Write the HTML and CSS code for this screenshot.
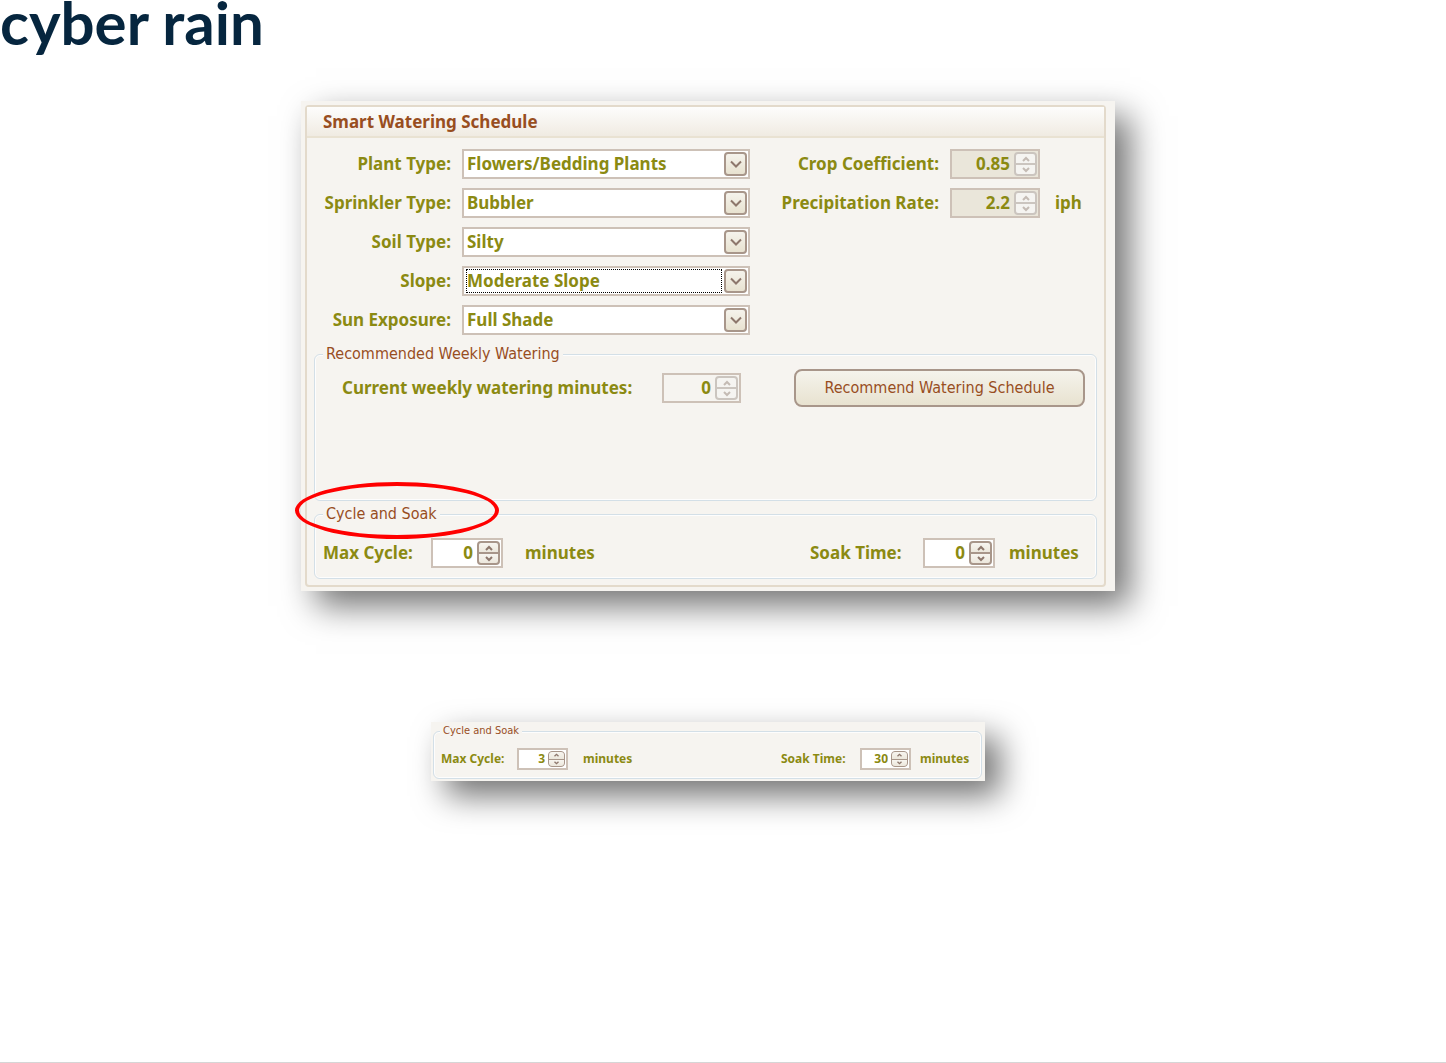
FILE: index.html
```html
<!DOCTYPE html>
<html lang="en">
<head>
  <meta charset="UTF-8">
  <meta name="viewport" content="width=device-width, initial-scale=1.0">
  <title>Cyber Rain - Smart Watering Schedule</title>
  <link rel="stylesheet" href="styles.css">
</head>
<body>

  <!-- Shared icons -->
  <svg class="sprite" aria-hidden="true">
    <symbol id="drop" viewBox="0 0 12 8"><path d="M1 1.5 L6 6.5 L11 1.5" /></symbol>
    <symbol id="up" viewBox="0 0 10 6"><path d="M2 5 L5 2 L8 5" /></symbol>
    <symbol id="down" viewBox="0 0 10 6"><path d="M2 1 L5 4 L8 1" /></symbol>
  </svg>

  <header class="logo">cyber rain</header>

  <main class="content">
    <!-- Schedule panel -->
    <section class="panel">
      <div class="frame">
        <h1 class="frame-title">Smart Watering Schedule</h1>

        <form class="settings">
          <label class="name" for="plant">Plant Type:</label>
          <span class="select">
            <select id="plant"><option>Flowers/Bedding Plants</option></select>
            <span class="arrow"><svg><use href="#drop" /></svg></span>
          </span>
          <label class="name" for="crop">Crop Coefficient:</label>
          <span class="spinner disabled filled">
            <input id="crop" type="number" step="0.01" value="0.85" disabled>
            <span class="steps">
              <button type="button" aria-label="Increase" disabled><svg><use href="#up" /></svg></button>
              <button type="button" aria-label="Decrease" disabled><svg><use href="#down" /></svg></button>
            </span>
          </span>
          <span></span>

          <label class="name" for="sprinkler">Sprinkler Type:</label>
          <span class="select">
            <select id="sprinkler"><option>Bubbler</option></select>
            <span class="arrow"><svg><use href="#drop" /></svg></span>
          </span>
          <label class="name" for="rate">Precipitation Rate:</label>
          <span class="spinner disabled filled">
            <input id="rate" type="number" step="0.1" value="2.2" disabled>
            <span class="steps">
              <button type="button" aria-label="Increase" disabled><svg><use href="#up" /></svg></button>
              <button type="button" aria-label="Decrease" disabled><svg><use href="#down" /></svg></button>
            </span>
          </span>
          <span class="unit">iph</span>

          <label class="name first" for="soil">Soil Type:</label>
          <span class="select">
            <select id="soil"><option>Silty</option></select>
            <span class="arrow"><svg><use href="#drop" /></svg></span>
          </span>

          <label class="name first" for="slope">Slope:</label>
          <span class="select focused">
            <select id="slope"><option>Moderate Slope</option></select>
            <span class="arrow"><svg><use href="#drop" /></svg></span>
          </span>

          <label class="name first" for="sun">Sun Exposure:</label>
          <span class="select">
            <select id="sun"><option>Full Shade</option></select>
            <span class="arrow"><svg><use href="#drop" /></svg></span>
          </span>
        </form>

        <fieldset class="group weekly">
          <legend>Recommended Weekly Watering</legend>
          <div class="weekly-row">
            <label for="current">Current weekly watering minutes:</label>
            <span class="spinner disabled">
              <input id="current" type="number" value="0" disabled>
              <span class="steps">
                <button type="button" aria-label="Increase" disabled><svg><use href="#up" /></svg></button>
                <button type="button" aria-label="Decrease" disabled><svg><use href="#down" /></svg></button>
              </span>
            </span>
            <button class="recommend" type="button">Recommend Watering Schedule</button>
          </div>
        </fieldset>

        <fieldset class="group cycle">
          <legend>Cycle and Soak</legend>
          <div class="cycle-row">
            <div class="max">
              <label for="max1">Max Cycle:</label>
              <span class="spinner">
                <input id="max1" type="number" value="0">
                <span class="steps">
                  <button type="button" aria-label="Increase"><svg><use href="#up" /></svg></button>
                  <button type="button" aria-label="Decrease"><svg><use href="#down" /></svg></button>
                </span>
              </span>
              <span>minutes</span>
            </div>
            <div class="soak">
              <label for="soak1">Soak Time:</label>
              <span class="spinner">
                <input id="soak1" type="number" value="0">
                <span class="steps">
                  <button type="button" aria-label="Increase"><svg><use href="#up" /></svg></button>
                  <button type="button" aria-label="Decrease"><svg><use href="#down" /></svg></button>
                </span>
              </span>
              <span>minutes</span>
            </div>
          </div>
          <span class="callout"></span>
        </fieldset>
      </div>
    </section>

    <!-- Cycle and Soak example -->
    <section class="panel mini">
      <fieldset class="group cycle">
        <legend>Cycle and Soak</legend>
        <div class="cycle-row">
          <div class="max">
            <label for="max2">Max Cycle:</label>
            <span class="spinner">
              <input id="max2" type="number" value="3">
              <span class="steps">
                <button type="button" aria-label="Increase"><svg><use href="#up" /></svg></button>
                <button type="button" aria-label="Decrease"><svg><use href="#down" /></svg></button>
              </span>
            </span>
            <span>minutes</span>
          </div>
          <div class="soak">
            <label for="soak2">Soak Time:</label>
            <span class="spinner">
              <input id="soak2" type="number" value="30">
              <span class="steps">
                <button type="button" aria-label="Increase"><svg><use href="#up" /></svg></button>
                <button type="button" aria-label="Decrease"><svg><use href="#down" /></svg></button>
              </span>
            </span>
            <span>minutes</span>
          </div>
        </div>
      </fieldset>
    </section>
  </main>

</body>
</html>
```
FILE: styles.css
```css
* {
  margin: 0;
  padding: 0;
  box-sizing: border-box;
}

body {
  display: flex;
  flex-direction: column;
  min-height: 100vh;
  background: #fff;
  color: #8b8a12;
  font: bold 17px/20px "Noto Sans", sans-serif;
  border-bottom: 1px solid #d6d6d6;
}

input, select, button {
  font: inherit;
  color: inherit;
}

.sprite {
  position: absolute;
  width: 0;
  height: 0;
}

.logo {
  height: 101px;
  color: #06263f;
  font: bold 60px/44px Lato, sans-serif;
}

.content {
  display: flex;
  flex-direction: column;
  align-items: center;
  padding-right: 30px;
}

/* Panels */
.panel {
  width: 100%;
  max-width: 814px;
  padding: 4px 9px 4px 4px;
  background: #f6f4f0;
  box-shadow: 15px 15px 32px rgba(0, 0, 0, 0.55);
}

.frame {
  padding-bottom: 6px;
  border: 2px solid #e3dacb;
  border-radius: 4px;
}

.frame-title {
  padding: 5px 16px 4px;
  border-bottom: 2px solid #e9e2d2;
  background: linear-gradient(#fdfdfc, #f0ebe2);
  color: #984e1f;
  font-size: 17px;
  line-height: 20px;
}

/* Settings grid */
.settings {
  display: grid;
  grid-template-columns: 144px 288px 1fr 90px 53px;
  gap: 9px 11px;
  align-items: center;
  padding: 11px 0 9px;
}

.name {
  text-align: right;
}

.first {
  grid-column: 1;
}

.unit {
  padding-left: 4px;
}

.select {
  position: relative;
  height: 30px;
  padding: 2px 3px;
  border: 2px solid #cdc1b7;
  background: #fff;
}

.select select {
  display: block;
  width: 100%;
  height: 22px;
  border: 0;
  background: none;
  appearance: none;
}

.focused {
  padding-right: 27px;
}

.focused select {
  outline: 1px dotted #000;
}

.arrow {
  position: absolute;
  top: 1px;
  right: 1px;
  display: flex;
  align-items: center;
  justify-content: center;
  width: 23px;
  height: 24px;
  border: 2px solid #a8968a;
  border-radius: 4px;
  background: linear-gradient(#f5f3ec, #e8e2d0);
  pointer-events: none;
}

.arrow svg {
  width: 12px;
  height: 8px;
}

svg {
  fill: none;
  stroke: #8d776c;
  stroke-width: 2;
}

/* Number boxes */
.spinner {
  display: flex;
  height: 30px;
  padding: 1px;
  border: 2px solid #cdc1b7;
  background: #fff;
}

.spinner input {
  flex: 1;
  width: 0;
  padding-right: 4px;
  border: 0;
  background: none;
  text-align: right;
  appearance: textfield;
}

.spinner input::-webkit-inner-spin-button {
  appearance: none;
}

.steps {
  display: flex;
  flex-direction: column;
  width: 23px;
  border: 2px solid #a8968a;
  border-radius: 4px;
  background: #a8968a;
  gap: 2px;
  overflow: hidden;
}

.steps button {
  display: flex;
  flex: 1;
  align-items: center;
  justify-content: center;
  min-height: 0;
  border: 0;
  background: linear-gradient(#f7f5f0, #ece7dc);
}

.steps svg {
  width: 10px;
  height: 6px;
}

.disabled {
  background: #f6f4f0;
}

.filled {
  background: #eae6da;
}

.disabled .steps {
  border-color: #cbc5bf;
  background: #cbc5bf;
}

.disabled .steps button {
  background: #f5f4f1;
}

.disabled svg {
  stroke: #c4bbb4;
}

/* Groups */
.group {
  position: relative;
  min-width: 0;
  margin: 0 7px;
  padding: 1px;
  border: 1px solid #d3dfe7;
  border-radius: 6px;
  box-shadow: inset 0 0 0 1px #fdfdfd;
}

.group legend {
  margin-left: 7px;
  padding: 0 3px;
  background: #f6f4f0;
  color: #984e1f;
  font: 16px/20px "DejaVu Sans Condensed", sans-serif;
}

.weekly {
  height: 157px;
  margin-bottom: 3px;
}

.weekly-row {
  display: flex;
  align-items: center;
  padding: 4px 10px 0 26px;
}

.weekly-row label {
  width: 320px;
}

.weekly-row .spinner {
  width: 79px;
}

.recommend {
  width: 291px;
  height: 38px;
  margin-left: auto;
  border: 2px solid #a8968a;
  border-radius: 8px;
  background: linear-gradient(#f5f3ec, #e8e2d0);
  color: #984e1f;
  font: 16px/20px "DejaVu Sans Condensed", sans-serif;
}

.cycle-row {
  display: flex;
  justify-content: space-between;
  padding: 13px 17px 9px 7px;
}

.max, .soak {
  display: grid;
  align-items: center;
}

.max {
  grid-template-columns: 108px 94px auto;
}

.soak {
  grid-template-columns: 113px 86px 69px;
}

.cycle-row .spinner {
  width: 72px;
}

.callout {
  position: absolute;
  top: -42px;
  left: -20px;
  width: 204px;
  height: 57px;
  border: 4px solid #f00;
  border-radius: 50%;
}

/* Small panel */
.mini {
  max-width: 554px;
  margin-top: 131px;
  padding: 2px 3px 2px 2px;
  font-size: 12px;
  line-height: 14px;
}

.mini .group {
  margin: 0;
}

.mini .group legend {
  margin-left: 5px;
  font-size: 11px;
  line-height: 14px;
}

.mini .cycle-row {
  padding: 9px 12px 7px 6px;
}

.mini .max {
  grid-template-columns: 76px 66px auto;
}

.mini .soak {
  grid-template-columns: 79px 60px 48px;
}

.mini .spinner {
  width: 51px;
  height: 22px;
}

.mini .spinner input {
  padding-right: 3px;
}

.mini .steps {
  width: 17px;
  border-width: 1px;
  gap: 1px;
}

.mini .steps svg {
  width: 7px;
  height: 4px;
}
```
